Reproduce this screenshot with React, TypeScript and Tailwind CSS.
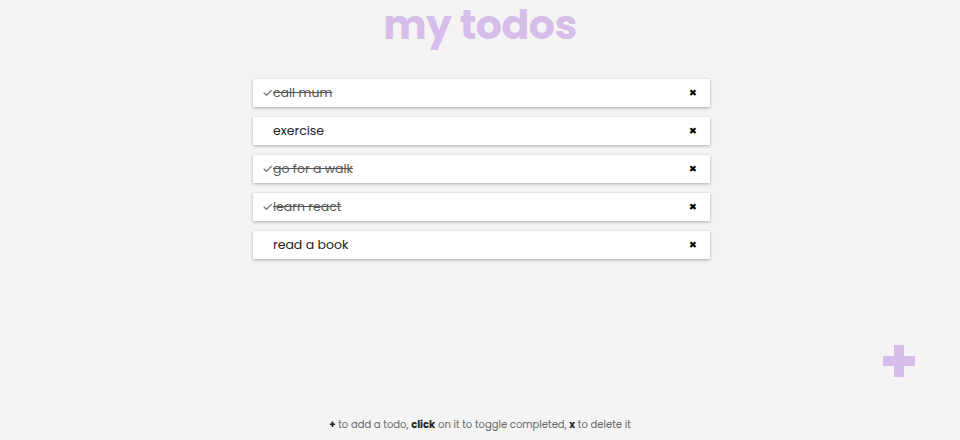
const todos = [
  { text: "call mum", done: true },
  { text: "exercise", done: false },
  { text: "go for a walk", done: true },
  { text: "learn react", done: true },
  { text: "read a book", done: false },
];

export default function App() {
  return (
    <div className="h-[440px] w-[960px] bg-[#f4f4f4] flex flex-col items-center font-['Poppins','Inter',sans-serif] text-[#222]">
      <h1 className="text-[41px] leading-[50px] font-bold text-[#d7bde9] tracking-[-0.5px]">
        my todos
      </h1>
      <ul className="w-[457px] ml-[3px] mt-[29px] flex flex-col gap-[10px]">
        {todos.map((t, i) => (
          <li
            key={i}
            className="h-[28px] bg-white shadow-[0_1px_3px_rgba(0,0,0,0.3)] flex items-center pl-[9px] pr-[13px] text-[12.5px]"
          >
            <span className="w-[11px] shrink-0 text-[12.5px] text-[#666]">{t.done ? "✓" : ""}</span>
            <span className={t.done ? "line-through text-[#555]" : "text-[#222]"}>
              {t.text}
            </span>
            <span className="ml-auto text-[13px] font-bold text-black">×</span>
          </li>
        ))}
      </ul>
      <div className="flex-1 w-full flex justify-end items-end pr-[45px]">
        <svg width="32" height="32" viewBox="0 0 32 32">
          <path d="M11 0h10v11h11v10H21v11H11V21H0V11h11z" fill="#d7bde9" />
        </svg>
      </div>
      <p className="text-[10px] text-[#666] mt-[40px] mb-[8px]">
        <b className="text-[#222]">+</b> to add a todo, <b className="text-[#222]">click</b> on it to toggle completed,{" "}
        <b className="text-[#222]">x</b> to delete it
      </p>
    </div>
  );
}
